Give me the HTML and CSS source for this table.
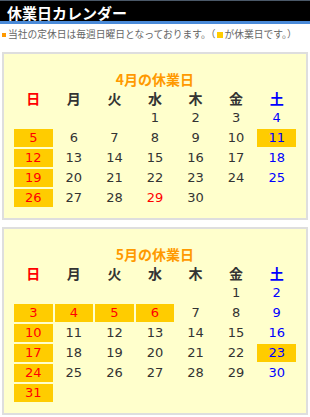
FILE: index.html
```html
<!DOCTYPE html>
<html lang="ja">
<head>
<meta charset="utf-8">
<link rel="stylesheet" href="styles.css">
</head>
<body>
<h1 class="head">休業日カレンダー</h1>
<p class="note"><span class="sq"></span>当社の定休日は毎週日曜日となっております。（<span class="sq sq-in"></span>が休業日です。）</p>

<div class="box">
  <div class="title">4月の休業日</div>
  <table class="cal">
    <tr class="wk"><th class="sun">日</th><th>月</th><th>火</th><th>水</th><th>木</th><th>金</th><th class="sat">土</th></tr>
    <tr><td></td><td></td><td></td><td>1</td><td>2</td><td>3</td><td class="sat">4</td></tr>
    <tr><td class="sun off">5</td><td>6</td><td>7</td><td>8</td><td>9</td><td>10</td><td class="sat off">11</td></tr>
    <tr><td class="sun off">12</td><td>13</td><td>14</td><td>15</td><td>16</td><td>17</td><td class="sat">18</td></tr>
    <tr><td class="sun off">19</td><td>20</td><td>21</td><td>22</td><td>23</td><td>24</td><td class="sat">25</td></tr>
    <tr><td class="sun off">26</td><td>27</td><td>28</td><td class="sun">29</td><td>30</td><td></td><td></td></tr>
  </table>
</div>

<div class="box">
  <div class="title">5月の休業日</div>
  <table class="cal">
    <tr class="wk"><th class="sun">日</th><th>月</th><th>火</th><th>水</th><th>木</th><th>金</th><th class="sat">土</th></tr>
    <tr><td></td><td></td><td></td><td></td><td></td><td>1</td><td class="sat">2</td></tr>
    <tr><td class="sun off">3</td><td class="sun off">4</td><td class="sun off">5</td><td class="sun off">6</td><td>7</td><td>8</td><td class="sat">9</td></tr>
    <tr><td class="sun off">10</td><td>11</td><td>12</td><td>13</td><td>14</td><td>15</td><td class="sat">16</td></tr>
    <tr><td class="sun off">17</td><td>18</td><td>19</td><td>20</td><td>21</td><td>22</td><td class="sat off">23</td></tr>
    <tr><td class="sun off">24</td><td>25</td><td>26</td><td>27</td><td>28</td><td>29</td><td class="sat">30</td></tr>
    <tr><td class="sun off">31</td><td></td><td></td><td></td><td></td><td></td><td></td></tr>
  </table>
</div>
</body>
</html>
```

FILE: styles.css
```css
html, body {
  margin: 0;
  padding: 0;
  background: #fff;
}
body {
  font-family: "DejaVu Sans", "Noto Sans CJK JP", sans-serif;
  color: #333;
}
.head {
  margin: 0;
  height: 18px;
  padding: 2px 0 0 7px;
  background: #000;
  border-top: 1px solid #4a5868;
  border-bottom: 3px solid #4a8ad8;
  color: #fff;
  font-family: "Noto Sans CJK JP", sans-serif;
  font-size: 15px;
  font-weight: bold;
  line-height: 20px;
  overflow: hidden;
}
.note {
  margin: 0;
  height: 12px;
  padding: 4px 0 12px 2px;
  font-family: "Noto Sans CJK JP", sans-serif;
  font-size: 9.75px;
  line-height: 12px;
  color: #666;
  white-space: nowrap;
}
.sq {
  display: inline-block;
  width: 4px;
  height: 4px;
  margin-right: 2px;
  background: #ff9900;
  vertical-align: 1px;
}
.sq-in {
  width: 6px;
  height: 6px;
  margin: 0 2px 0 1px;
  background: #ffcc00;
  vertical-align: 0;
}
.box {
  margin: 0 2px 7px 2px;
  padding: 17px 0 9px;
  background: #ffffcc;
  border: 2px solid #dedede;
}
.title {
  text-align: center;
  font-family: "Noto Sans CJK JP", sans-serif;
  font-size: 14px;
  font-weight: bold;
  line-height: 16px;
  color: #ff9900;
}
.cal {
  width: 286px;
  margin: 0 auto;
  table-layout: fixed;
  border-collapse: separate;
  border-spacing: 2px;
}
.cal th, .cal td {
  height: 18px;
  padding: 0;
  text-align: center;
  line-height: 18px;
}
.cal th {
  font-family: "Noto Sans CJK JP", sans-serif;
  font-size: 14px;
  font-weight: bold;
  color: #333;
}
.cal td {
  font-size: 13px;
  color: #333;
}
.cal .sun {
  color: #ff0000;
}
.cal .sat {
  color: #0000ff;
}
.cal .off {
  background: #ffcc00;
}
```
